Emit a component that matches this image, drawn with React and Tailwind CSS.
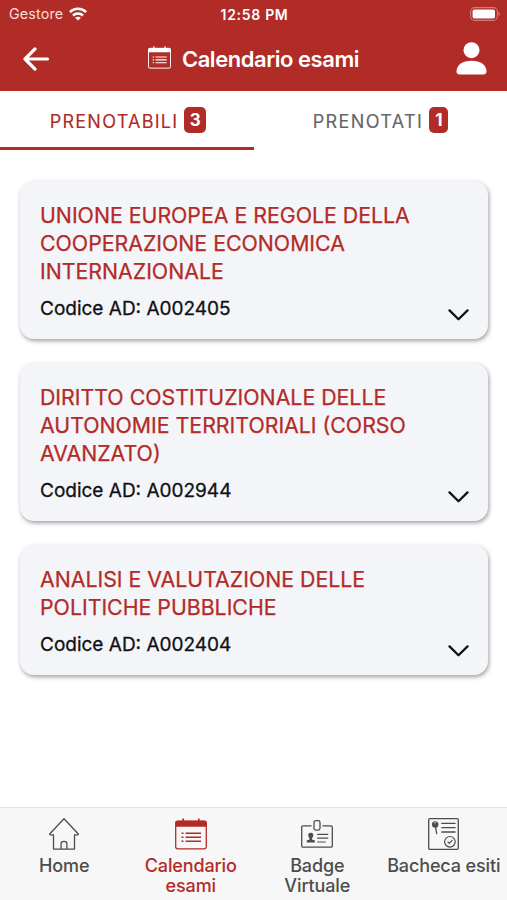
import React from "react";

function WifiIcon() {
  return (
    <svg className="ml-[6px] h-[14px] w-[18px]" viewBox="0 0 18 14" fill="none" stroke="white" strokeWidth="2.5">
      <path d="M0.9 5.2C5.4 .7 12.6 .7 17.1 5.2" />
      <path d="M4 8.5c2.8-2.7 7.2-2.7 10 0" />
      <path d="M9 13.6 6.1 10.8c1.6-1.5 4.2-1.5 5.8 0Z" fill="white" stroke="none" />
    </svg>
  );
}

function BatteryIcon() {
  return (
    <svg className="h-[14px] w-[30px]" viewBox="0 0 30 14" fill="none">
      <rect x="0.6" y="0.6" width="26.8" height="12.8" rx="4" stroke="#d07d7a" strokeWidth="1.1" />
      <rect x="2.6" y="2.5" width="22.4" height="9" rx="1.8" fill="white" />
      <path d="M28.5 4.8c1.7.7 1.7 3.7 0 4.4Z" fill="#d07d7a" />
    </svg>
  );
}

function CalendarIcon({ className }) {
  return (
    <svg className={className} viewBox="0 0 32 32" fill="none" stroke="currentColor">
      <rect x="0.7" y="3.2" width="30.6" height="27.6" rx="1.8" strokeWidth="1.3" />
      <path d="M0.5 8.8V4.6Q.5 2.8 2.3 2.8h27.4q1.8 0 1.8 1.8v4.2Z" fill="currentColor" stroke="none" />
      <path d="M8.2.4v4M23.8.4v4" strokeWidth="1.7" />
      <path d="M10.5 15.3H26M10.5 19.3H26M10.5 23.3H26" strokeWidth="1.4" />
      <path d="M6.5 15.3h2M6.5 19.3h2M6.5 23.3h2" strokeWidth="1.6" />
    </svg>
  );
}

function HomeIcon() {
  return (
    <svg className="h-8 w-[30px]" viewBox="0 0 30 32" fill="none" stroke="#4d4d4d" strokeWidth="1.3" strokeLinejoin="round">
      <path d="M15 .8.9 15.8q-.5 1 .5 1.1h3.1v14.2h21V16.9h3.1q1-.1.5-1.1Z" />
      <path d="M12.1 31v-5.5q0-2.2 2.9-2.2t2.9 2.2V31" />
    </svg>
  );
}

function BadgeIcon() {
  return (
    <svg className="mb-[2px] h-7 w-8" viewBox="0 0 32 28" fill="none" stroke="#4d4d4d" strokeWidth="1.3">
      <path d="M10.6 5.8H2Q.7 5.8.7 7.1v18.8q0 1.3 1.3 1.3h28q1.3 0 1.3-1.3V7.1q0-1.3-1.3-1.3H21.4" />
      <rect x="13" y="0.7" width="6" height="9.4" rx="1.8" />
      <path d="M9.7 12.8c-2.3 0-2.7 1.6-2.4 3.2.2 1 .8 1.7 1.2 2.2v1.2L5.7 20.6v1.8h8.1v-1.8L11 19.4v-1.2c.5-.5 1-1.2 1.2-2.2.3-1.6-.2-3.2-2.5-3.2Z" fill="#4d4d4d" stroke="none" />
      <path d="M16.2 14.4h11M16.2 18.2h11M16.2 22h8.5" strokeWidth="1.2" />
    </svg>
  );
}

function BoardIcon() {
  return (
    <svg className="h-8 w-[31px]" viewBox="0 0 31 32" fill="none" stroke="#4d4d4d" strokeWidth="1.3">
      <rect x="0.7" y="0.7" width="29.6" height="30.6" rx="1.3" />
      <path d="M13.8 5.4h13.3M13.8 9.7h13.3M13.8 14h13.3" strokeLinecap="round" />
      <circle cx="7.2" cy="6.4" r="3.2" fill="#4d4d4d" stroke="none" />
      <path d="m7.4 8 1.3 7.6" strokeLinecap="round" />
      <path d="M6.3 5.2 8.5 4" stroke="#f7f7f7" strokeWidth="0.8" />
      <circle cx="21.9" cy="23.8" r="5.3" strokeWidth="1.2" />
      <path d="m19.6 23.7 1.7 1.7 3-3.3" strokeWidth="1.2" />
    </svg>
  );
}

const exams = [
  {
    lines: ["UNIONE EUROPEA E REGOLE DELLA", "COOPERAZIONE ECONOMICA", "INTERNAZIONALE"],
    code: "A002405",
  },
  {
    lines: ["DIRITTO COSTITUZIONALE DELLE", "AUTONOMIE TERRITORIALI (CORSO", "AVANZATO)"],
    code: "A002944",
  },
  {
    lines: ["ANALISI E VALUTAZIONE DELLE", "POLITICHE PUBBLICHE"],
    code: "A002404",
  },
];

function ExamCard({ exam }) {
  return (
    <article className="flex items-end justify-between rounded-[14px] bg-[#f3f5f9] pt-5 pr-[19px] pb-4 pl-5 shadow-[1px_2px_4px_rgba(0,0,0,0.38)]">
      <div className="whitespace-nowrap">
        <h2 className="text-[21.3px] leading-7 font-normal text-[#b32b28] [-webkit-text-stroke:0.25px_#b32b28]">
          {exam.lines.map((text) => (
            <span key={text} className="block">{text}</span>
          ))}
        </h2>
        <p className="mt-[10px] text-[19px] leading-7 text-[#101114] [-webkit-text-stroke:0.3px_#101114]">
          Codice AD: {exam.code}
        </p>
      </div>
      <svg className="mb-0.5 h-3 w-[21px]" viewBox="0 0 21 12" fill="none" stroke="#101114" strokeWidth="2.3" strokeLinecap="round" strokeLinejoin="round">
        <path d="m1.5 1.4 9 8.9 9-8.9" />
      </svg>
    </article>
  );
}

function NavItem({ icon, lines, active }) {
  return (
    <a className={`flex flex-1 basis-0 flex-col items-center text-[18px] leading-5 font-medium whitespace-nowrap ${active ? "text-[#b32b28]" : "text-[#4d4d4d]"}`}>
      <span className="flex h-[33px] items-end">{icon}</span>
      <span className="mt-[6px] text-center tracking-[-0.13px]">
        {lines.map((line) => (
          <span key={line} className="block">{line}</span>
        ))}
      </span>
    </a>
  );
}

export default function App() {
  return (
    <div className="flex h-[900px] w-[507px] flex-col overflow-hidden bg-white font-['Inter','Liberation_Sans',sans-serif]">
      <header className="h-[91px] bg-[#b12b27] text-white">
        <div className="flex h-7 items-center pr-[7px] pl-[9px]">
          <div className="flex flex-1 items-center text-[14.3px] text-[#f9dedb]">
            <span className="tracking-[0.15px]">Gestore</span>
            <WifiIcon />
          </div>
          <span className="text-center text-[14px] font-semibold tracking-[0.7px] whitespace-nowrap">12:58 PM</span>
          <div className="flex flex-1 justify-end"><BatteryIcon /></div>
        </div>
        <div className="flex h-[62px] items-center pr-5 pl-[23px]">
          <svg className="h-6 w-[27px]" viewBox="0 0 27 24" fill="none" stroke="white" strokeWidth="3.2" strokeLinecap="round" strokeLinejoin="round">
            <path d="M12 1.9 2 12l10 10.1M2.4 12H24.5" />
          </svg>
          <div className="flex flex-1 items-center justify-center pl-px">
            <CalendarIcon className="mb-[3px] h-[23px] w-[23px]" />
            <h1 className="ml-[11px] text-[22px] leading-7 font-semibold tracking-[-0.45px] whitespace-nowrap">Calendario esami</h1>
          </div>
          <svg className="mb-[2px] h-[33px] w-[31px]" viewBox="0 0 31 33" fill="white">
            <circle cx="15.5" cy="8.2" r="8" />
            <path d="M.5 29.5C.5 22.8 7 18.8 15.5 18.8s15 4 15 10.7c0 2-1.3 3-3 3h-24c-1.7 0-3-1-3-3Z" />
          </svg>
        </div>
      </header>

      <nav className="flex h-[59px] text-[18px] leading-6">
        <div className="flex w-[254px] items-center justify-center border-b-3 border-[#b12b27] pt-0.5 pl-[2px] text-[#b12b27]">
          <span className="pt-1 tracking-[1.25px] [-webkit-text-stroke:0.15px_#b12b27]">PRENOTABILI</span>
          <span className="ml-[6px] flex h-[26px] w-[22px] items-center justify-center rounded-[5px] bg-[#b12b27] text-[17px] font-bold text-white">3</span>
        </div>
        <div className="flex flex-1 items-center justify-center border-b-3 border-transparent pt-0.5 text-[#666]">
          <span className="pt-1 tracking-[1.4px] [-webkit-text-stroke:0.15px_#666]">PRENOTATI</span>
          <span className="ml-[6px] flex h-[26px] w-[19px] items-center justify-center rounded-[5px] bg-[#b12b27] text-[17px] font-bold text-white">1</span>
        </div>
      </nav>

      <main className="flex flex-1 flex-col gap-6 pt-[31px] pr-[19px] pl-5">
        {exams.map((exam) => <ExamCard key={exam.code} exam={exam} />)}
      </main>

      <footer className="flex h-[93px] border-t border-[#e3e3e3] bg-[#f7f7f7] pt-[9px] pl-px">
        <NavItem icon={<HomeIcon />} lines={["Home"]} />
        <NavItem icon={<CalendarIcon className="h-8 w-8" />} lines={["Calendario", "esami"]} active />
        <NavItem icon={<BadgeIcon />} lines={["Badge", "Virtuale"]} />
        <NavItem icon={<BoardIcon />} lines={["Bacheca esiti"]} />
      </footer>
    </div>
  );
}
